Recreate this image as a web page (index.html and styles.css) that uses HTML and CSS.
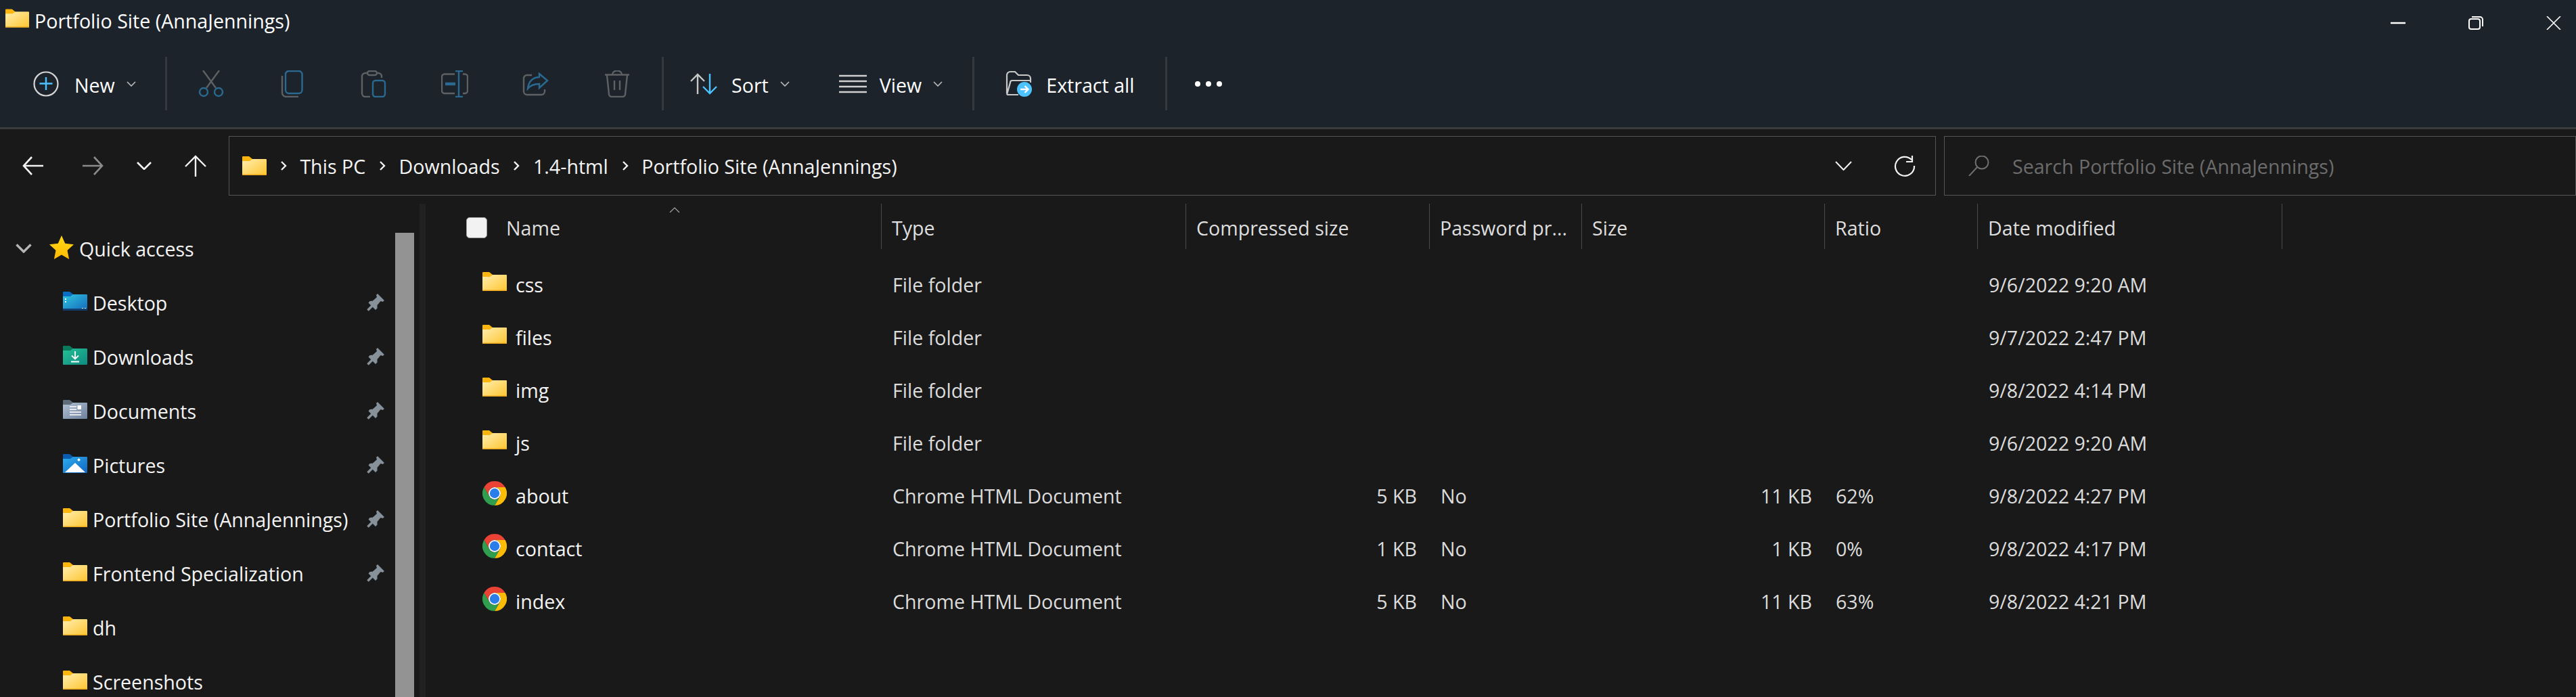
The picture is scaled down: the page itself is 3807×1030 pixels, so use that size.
FILE: index.html
```html
<!DOCTYPE html>
<html lang="en">
<head>
    <meta charset="UTF-8">
    <title>Portfolio Site (AnnaJennings)</title>
    <link rel="stylesheet" href="styles.css">
</head>
<body>
    <svg class="sprite" aria-hidden="true">
        <defs>
            <linearGradient id="gYellow" x1="0" y1="0" x2="1" y2="1"><stop offset="0" stop-color="#ffeeb0"/><stop offset="1" stop-color="#fec52f"/></linearGradient>
            <linearGradient id="gStar" x1="0" y1="0" x2="0" y2="1"><stop offset="0" stop-color="#ffd91a"/><stop offset="1" stop-color="#ffb900"/></linearGradient>
            <linearGradient id="gDesk" x1="0" y1="0" x2="1" y2="1"><stop offset="0" stop-color="#2fc6e0"/><stop offset="1" stop-color="#1668bd"/></linearGradient>
            <linearGradient id="gDown" x1="0" y1="0" x2="1" y2="1"><stop offset="0" stop-color="#24c196"/><stop offset="1" stop-color="#0e8a80"/></linearGradient>
            <linearGradient id="gDocs" x1="0" y1="0" x2="1" y2="1"><stop offset="0" stop-color="#b3c2d3"/><stop offset="1" stop-color="#6c7f9c"/></linearGradient>
            <linearGradient id="gPics" x1="0" y1="0" x2="1" y2="1"><stop offset="0" stop-color="#2bb0f0"/><stop offset="1" stop-color="#1464c0"/></linearGradient>

            <symbol id="folder" viewBox="0 0 36 28">
                <path d="M1 0H10L15 4V9H0V1A1 1 0 0 1 1 0Z" fill="#fbb50f"/>
                <path d="M0 7H11L15 4H35A1 1 0 0 1 36 5V27A1 1 0 0 1 35 28H1A1 1 0 0 1 0 27Z" fill="url(#gYellow)"/>
                <path d="M0 27.2H36" stroke="#eda81c" stroke-width="1.4"/>
            </symbol>
            <symbol id="chrome" viewBox="0 0 36 36">
                <path d="M2.41 9A18 18 0 0 1 33.59 9H18A9 9 0 0 0 10.2 22.5Z" fill="#ea4335"/>
                <path d="M33.59 9A18 18 0 0 1 18 36L25.79 22.5A9 9 0 0 0 18 9Z" fill="#fbbc05"/>
                <path d="M18 36A18 18 0 0 1 2.41 9L10.2 22.5A9 9 0 0 0 25.79 22.5Z" fill="#2f9e4f"/>
                <circle cx="18" cy="18" r="9" fill="#fff"/>
                <circle cx="18" cy="18" r="7.2" fill="#2b7de9"/>
            </symbol>
            <symbol id="pin" viewBox="0 0 26 26">
                <path d="M16 0 26 10 23.500 12 20.500 11 15.500 17 15.500 21.500 13 24 2.500 13.500 4.500 11 9 10.500 15 5 14 2Z" fill="#87919a"/>
                <path d="M1.500 24.500 8 18" stroke="#87919a" stroke-width="3.500"/>
            </symbol>
            <symbol id="crumb" viewBox="0 0 10 14">
                <path d="M2 1 8 7 2 13" fill="none" stroke="#f2f2f2" stroke-width="2.400"/>
            </symbol>
            <symbol id="chev" viewBox="0 0 14 8">
                <path d="M1 1 7 7 13 1" fill="none" stroke="#b4b8bb" stroke-width="1.700"/>
            </symbol>
        </defs>
    </svg>

    <div class="window">
        <header class="ribbon">
            <div class="titlebar">
                <svg class="folder-title"><use href="#folder"/></svg>
                <span class="title-text">Portfolio Site (AnnaJennings)</span>
                <div class="win-controls">
                    <svg class="win-btn" viewBox="0 0 22 20"><path d="M0 10H22" stroke="#fff" stroke-width="2.500"/></svg>
                    <svg class="win-btn" viewBox="0 0 22 20" fill="none" stroke="#fff" stroke-width="2"><rect x="1" y="4" width="16" height="15" rx="3"/><path d="M5 1H17A4 4 0 0 1 21 5V15"/></svg>
                    <svg class="win-btn" viewBox="0 0 22 20" fill="none" stroke="#fff" stroke-width="1.600"><path d="M1 0 21 20M21 0 1 20"/></svg>
                </div>
            </div>
            <div class="commands">
                <div class="cmd cmd-new">
                    <svg class="icon-new" viewBox="0 0 38 38" fill="none"><circle cx="19" cy="19" r="17.500" stroke="#d6d6d6" stroke-width="2.200"/><path d="M19 9V28M9.500 18.500H28.500" stroke="#4cc2ff" stroke-width="2.400"/></svg>
                    <span class="cmd-label">New</span>
                    <svg class="chev"><use href="#chev"/></svg>
                </div>
                <div class="sep"></div>
                <div class="cmd-icons">
                    <svg class="icon-btn" viewBox="0 0 40 40" fill="none" stroke-width="2.400">
                        <path d="M8 0 27 26M32 0 13 26" stroke="#5d6163"/>
                        <circle cx="9" cy="32" r="6" stroke="#2b6a90"/><circle cx="31" cy="32" r="6" stroke="#2b6a90"/>
                    </svg>
                    <svg class="icon-btn" viewBox="0 0 40 40" fill="none" stroke-width="2.400">
                        <path d="M5 8V33A6 6 0 0 0 11 39H29" stroke="#5d6163"/>
                        <rect x="10" y="1" width="24.500" height="33" rx="5" stroke="#2b6a90"/>
                    </svg>
                    <svg class="icon-btn" viewBox="0 0 40 40" fill="none" stroke-width="2.400">
                        <path d="M11 4H8A5 5 0 0 0 3 9V34A5 5 0 0 0 8 39H15M25 4H27A5 5 0 0 1 32 9V11" stroke="#5d6163"/>
                        <rect x="11" y="1" width="14" height="6" rx="3" stroke="#5d6163"/>
                        <rect x="19" y="15" width="18" height="24" rx="4" stroke="#2b6a90"/>
                    </svg>
                    <svg class="icon-btn" viewBox="0 0 40 40" fill="none" stroke-width="2.400">
                        <path d="M20 5.500H5A4 4 0 0 0 1 9.500V30A4 4 0 0 0 5 34H20M32 5.500H35A4 4 0 0 1 39 9.500V30A4 4 0 0 1 35 34H32" stroke="#5d6163"/>
                        <path d="M26 1V39M21 1H32M21 39H32" stroke="#2b6a90"/>
                        <path d="M6 20H21" stroke="#2b6a90" stroke-width="4.500"/>
                    </svg>
                    <svg class="icon-btn" viewBox="0 0 40 40" fill="none" stroke-width="2.400">
                        <path d="M14 7H7A5 5 0 0 0 2 12V31A5 5 0 0 0 7 36H28A5 5 0 0 0 33 31V28" stroke="#5d6163"/>
                        <path d="M25 5 37 15 25 26V20C17 20 12 22 8 27C9 16 16 10 25 10Z" stroke="#2b6a90"/>
                    </svg>
                    <svg class="icon-btn" viewBox="0 0 40 40" fill="none" stroke="#5d6163" stroke-width="2.400">
                        <path d="M2 6.500H38M13 6A7 5.500 0 0 1 27 6M5 7 8 35A4 4 0 0 0 12 39H28A4 4 0 0 0 32 35L35 7M16 15V29M24 15V29"/>
                    </svg>
                </div>
                <div class="sep"></div>
                <div class="cmd cmd-sort">
                    <svg class="icon-sort" viewBox="0 0 42 32" fill="none" stroke-width="2.400">
                        <path d="M12 31V2M2 12 12 2 22 12" stroke="#c8c8c8"/>
                        <path d="M30 1V30M20 20 30 30 40 20" stroke="#4cc2ff"/>
                    </svg>
                    <span class="cmd-label">Sort</span>
                    <svg class="chev"><use href="#chev"/></svg>
                </div>
                <div class="cmd cmd-view">
                    <svg class="icon-view" viewBox="0 0 41 28" stroke="#cfcfcf" stroke-width="2.600"><path d="M0 2H41M0 10H41M0 18H41M0 26H41"/></svg>
                    <span class="cmd-label">View</span>
                    <svg class="chev"><use href="#chev"/></svg>
                </div>
                <div class="sep sep-view"></div>
                <div class="cmd cmd-extract">
                    <svg class="icon-extract" viewBox="0 0 40 40" fill="none">
                        <path d="M3 34V7A5 5 0 0 1 8 2H15L20 7H33A5 5 0 0 1 38 12V18M3 36 8 18A3 3 0 0 1 11 15H38M3 36H20" stroke="#c8c8c8" stroke-width="2.200"/>
                        <circle cx="29" cy="28" r="11" fill="#4cc2ff"/>
                        <path d="M23 28H34M29.500 23 34.500 28 29.500 33" stroke="#fff" stroke-width="2.400"/>
                    </svg>
                    <span class="cmd-label">Extract all</span>
                </div>
                <div class="sep"></div>
                <div class="dots"><i></i><i></i><i></i></div>
            </div>
        </header>

        <nav class="navbar">
            <div class="nav-btns">
                <svg class="nav-arrow" viewBox="0 0 32 28" fill="none" stroke="#f2f2f2" stroke-width="2.600"><path d="M31 14H3M14 1 2 14 14 27"/></svg>
                <svg class="nav-arrow nav-forward" viewBox="0 0 32 28" fill="none" stroke="#8b8b8b" stroke-width="2.600"><path d="M1 14H29M18 1 30 14 18 27"/></svg>
                <svg class="nav-down" viewBox="0 0 22 12" fill="none" stroke="#f2f2f2" stroke-width="2.600"><path d="M1 1 11 11 21 1"/></svg>
                <svg class="nav-up" viewBox="0 0 32 32" fill="none" stroke="#f2f2f2" stroke-width="2.400"><path d="M16 32V2M1 17 16 2 31 17"/></svg>
            </div>
            <div class="address">
                <svg class="folder-addr"><use href="#folder"/></svg>
                <svg class="crumb"><use href="#crumb"/></svg>
                <span>This PC</span>
                <svg class="crumb"><use href="#crumb"/></svg>
                <span>Downloads</span>
                <svg class="crumb"><use href="#crumb"/></svg>
                <span>1.4-html</span>
                <svg class="crumb"><use href="#crumb"/></svg>
                <span>Portfolio Site (AnnaJennings)</span>
                <svg class="addr-down" viewBox="0 0 25 14" fill="none" stroke="#f2f2f2" stroke-width="2"><path d="M1 1 12.500 13 24 1"/></svg>
                <svg class="addr-refresh" viewBox="0 0 32 32" fill="none" stroke="#f2f2f2" stroke-width="2.200"><path d="M26 7A14 14 0 1 0 30 16M27 1V10H18"/></svg>
            </div>
            <div class="search">
                <svg class="search-icon" viewBox="0 0 32 30" fill="none" stroke="#707070" stroke-width="2"><circle cx="21" cy="10" r="9.500"/><path d="M14 17 2 30"/></svg>
                <span>Search Portfolio Site (AnnaJennings)</span>
            </div>
        </nav>

        <div class="content">
            <aside class="sidebar">
                <div class="tree">
                    <div class="tree-row tree-head">
                        <svg class="tree-chev" viewBox="0 0 24 14" fill="none" stroke="#b5b5b5" stroke-width="3.400"><path d="M1.500 1.500 12 12 22.500 1.500"/></svg>
                        <svg class="star" viewBox="0 0 36 36"><path d="M18 0 23.200 11.800 36 13.300 26.500 22 29.100 35 18 28.500 6.900 35 9.500 22 0 13.300 12.800 11.800Z" fill="url(#gStar)"/></svg>
                        <span>Quick access</span>
                    </div>
                    <div class="tree-row">
                        <svg class="tree-icon" viewBox="0 0 36 28">
                            <path d="M1 0H10L15 4V9H0V1A1 1 0 0 1 1 0Z" fill="#0b6cc4"/>
                            <path d="M0 7H11L15 4H35A1 1 0 0 1 36 5V27A1 1 0 0 1 35 28H1A1 1 0 0 1 0 27Z" fill="url(#gDesk)"/>
                            <path d="M0 26.500H36" stroke="#123f70" stroke-width="3"/>
                            <path d="M3 10H5V12H3ZM3 14H5V16H3ZM28 24H30V25H28ZM32 24H34V25H32Z" fill="#e6f7fb"/>
                        </svg>
                        <span>Desktop</span>
                        <svg class="pin"><use href="#pin"/></svg>
                    </div>
                    <div class="tree-row">
                        <svg class="tree-icon" viewBox="0 0 36 28">
                            <path d="M1 0H10L15 4V9H0V1A1 1 0 0 1 1 0Z" fill="#0a7a5e"/>
                            <path d="M0 7H11L15 4H35A1 1 0 0 1 36 5V27A1 1 0 0 1 35 28H1A1 1 0 0 1 0 27Z" fill="url(#gDown)"/>
                            <path d="M18 8V19M13 14.500 18 19.500 23 14.500M12 23.500H24" fill="none" stroke="#fff" stroke-width="1.800"/>
                        </svg>
                        <span>Downloads</span>
                        <svg class="pin"><use href="#pin"/></svg>
                    </div>
                    <div class="tree-row">
                        <svg class="tree-icon" viewBox="0 0 36 28">
                            <path d="M1 0H10L15 4V9H0V1A1 1 0 0 1 1 0Z" fill="#5d6c79"/>
                            <path d="M0 7H11L15 4H35A1 1 0 0 1 36 5V27A1 1 0 0 1 35 28H1A1 1 0 0 1 0 27Z" fill="url(#gDocs)"/>
                            <path d="M10 10H20M10 14H20M10 18H27M10 22H27" fill="none" stroke="#fff" stroke-width="1.500"/>
                            <path d="M21.500 8H27V14H21.500Z" fill="#fff"/>
                        </svg>
                        <span>Documents</span>
                        <svg class="pin"><use href="#pin"/></svg>
                    </div>
                    <div class="tree-row">
                        <svg class="tree-icon" viewBox="0 0 36 28">
                            <path d="M1 0H10L15 4V9H0V1A1 1 0 0 1 1 0Z" fill="#0b5cb0"/>
                            <path d="M0 7H11L15 4H35A1 1 0 0 1 36 5V27A1 1 0 0 1 35 28H1A1 1 0 0 1 0 27Z" fill="url(#gPics)"/>
                            <path d="M3 27 18 13 33 27Z" fill="#fff"/>
                            <circle cx="23.500" cy="8.500" r="2" fill="#fff"/>
                        </svg>
                        <span>Pictures</span>
                        <svg class="pin"><use href="#pin"/></svg>
                    </div>
                    <div class="tree-row">
                        <svg class="tree-icon"><use href="#folder"/></svg>
                        <span>Portfolio Site (AnnaJennings)</span>
                        <svg class="pin"><use href="#pin"/></svg>
                    </div>
                    <div class="tree-row">
                        <svg class="tree-icon"><use href="#folder"/></svg>
                        <span>Frontend Specialization</span>
                        <svg class="pin"><use href="#pin"/></svg>
                    </div>
                    <div class="tree-row">
                        <svg class="tree-icon"><use href="#folder"/></svg>
                        <span>dh</span>
                    </div>
                    <div class="tree-row">
                        <svg class="tree-icon"><use href="#folder"/></svg>
                        <span>Screenshots</span>
                    </div>
                </div>
                <div class="scroll-thumb"></div>
            </aside>
            <div class="splitter"></div>

            <main class="files">
                <div class="file-head">
                    <div class="hcell hcell-name">
                        <span class="checkbox"></span>
                        <span>Name</span>
                        <svg class="sort-caret" viewBox="0 0 16 8" fill="none" stroke="#a8a8a8" stroke-width="1.200"><path d="M1 8 8 1 15 8"/></svg>
                    </div>
                    <div class="hcell">Type</div>
                    <div class="hcell">Compressed size</div>
                    <div class="hcell">Password pr...</div>
                    <div class="hcell">Size</div>
                    <div class="hcell">Ratio</div>
                    <div class="hcell">Date modified</div>
                </div>
                <div class="file-row">
                    <div class="cell cell-name"><svg class="file-folder"><use href="#folder"/></svg>css</div>
                    <div class="cell">File folder</div><div class="cell"></div><div class="cell"></div><div class="cell"></div><div class="cell"></div>
                    <div class="cell">9/6/2022 9:20 AM</div>
                </div>
                <div class="file-row">
                    <div class="cell cell-name"><svg class="file-folder"><use href="#folder"/></svg>files</div>
                    <div class="cell">File folder</div><div class="cell"></div><div class="cell"></div><div class="cell"></div><div class="cell"></div>
                    <div class="cell">9/7/2022 2:47 PM</div>
                </div>
                <div class="file-row">
                    <div class="cell cell-name"><svg class="file-folder"><use href="#folder"/></svg>img</div>
                    <div class="cell">File folder</div><div class="cell"></div><div class="cell"></div><div class="cell"></div><div class="cell"></div>
                    <div class="cell">9/8/2022 4:14 PM</div>
                </div>
                <div class="file-row">
                    <div class="cell cell-name"><svg class="file-folder"><use href="#folder"/></svg>js</div>
                    <div class="cell">File folder</div><div class="cell"></div><div class="cell"></div><div class="cell"></div><div class="cell"></div>
                    <div class="cell">9/6/2022 9:20 AM</div>
                </div>
                <div class="file-row">
                    <div class="cell cell-name"><svg class="file-chrome"><use href="#chrome"/></svg>about</div>
                    <div class="cell">Chrome HTML Document</div>
                    <div class="cell cell-num">5 KB</div>
                    <div class="cell">No</div>
                    <div class="cell cell-num">11 KB</div>
                    <div class="cell">62%</div>
                    <div class="cell">9/8/2022 4:27 PM</div>
                </div>
                <div class="file-row">
                    <div class="cell cell-name"><svg class="file-chrome"><use href="#chrome"/></svg>contact</div>
                    <div class="cell">Chrome HTML Document</div>
                    <div class="cell cell-num">1 KB</div>
                    <div class="cell">No</div>
                    <div class="cell cell-num">1 KB</div>
                    <div class="cell">0%</div>
                    <div class="cell">9/8/2022 4:17 PM</div>
                </div>
                <div class="file-row">
                    <div class="cell cell-name"><svg class="file-chrome"><use href="#chrome"/></svg>index</div>
                    <div class="cell">Chrome HTML Document</div>
                    <div class="cell cell-num">5 KB</div>
                    <div class="cell">No</div>
                    <div class="cell cell-num">11 KB</div>
                    <div class="cell">63%</div>
                    <div class="cell">9/8/2022 4:21 PM</div>
                </div>
            </main>
        </div>
    </div>
</body>
</html>
```

FILE: styles.css
```css
html, body {
    margin: 0;
    height: 100%;
    overflow: hidden;
    background-color: #191919;
}
body {
    font-family: "Open Sans", "Noto Sans", sans-serif;
    font-size: 28.6px;
    color: #ececec;
}
svg {
    display: block;
    flex: none;
}
.sprite {
    width: 0;
    height: 0;
}
.window {
    display: flex;
    flex-direction: column;
    height: 1030px;
    overflow: hidden;
}

/* title + command bar */
.ribbon {
    background-color: #1c232a;
    height: 188px;
    border-bottom: 3px solid #3b3c3d;
    flex: none;
}
.titlebar {
    display: flex;
    align-items: center;
    height: 60px;
    padding-left: 8px;
    color: #fff;
}
.folder-title {
    width: 35px;
    height: 28px;
    margin: -6px 8px 0 0;
}
.win-controls {
    display: flex;
    gap: 93px;
    margin: 8px 22px 0 auto;
}
.win-btn {
    width: 22px;
    height: 20px;
}
.commands {
    display: flex;
    align-items: center;
    height: 79px;
    margin-top: 24px;
    color: #fff;
}
.sep {
    width: 3px;
    height: 79px;
    background-color: #33393f;
    flex: none;
}
.cmd {
    display: flex;
    align-items: center;
    flex: none;
}
.cmd-label {
    padding-top: 3px;
}
.chev {
    width: 14px;
    height: 8px;
    margin-left: 17px;
}
.cmd-new {
    width: 244px;
    padding-left: 49px;
    box-sizing: border-box;
}
.icon-new {
    width: 38px;
    height: 38px;
    margin-right: 23px;
}
.cmd-icons {
    display: flex;
    padding-left: 5px;
    padding-right: 6px;
}
.icon-btn {
    width: 40px;
    height: 40px;
    margin: 0 40px;
}
.cmd-sort {
    margin-left: 38px;
}
.icon-sort {
    width: 42px;
    height: 32px;
    margin-right: 20px;
}
.cmd-view {
    margin-left: 73px;
}
.icon-view {
    width: 41px;
    height: 28px;
    margin-right: 19px;
}
.sep-view {
    margin-left: 44px;
}
.cmd-extract {
    margin-left: 45px;
    margin-right: 45px;
}
.icon-extract {
    width: 40px;
    height: 40px;
    margin-right: 21px;
}
.dots {
    display: flex;
    gap: 8px;
    margin-left: 41px;
}
.dots i {
    display: block;
    width: 8px;
    height: 8px;
    border-radius: 50%;
    background-color: #fff;
}

/* back/forward + address + search */
.navbar {
    display: flex;
    align-items: center;
    height: 88px;
    margin: 10px 0 12px;
    flex: none;
}
.nav-btns {
    display: flex;
    align-items: center;
    gap: 49px;
    padding-left: 33px;
}
.nav-arrow {
    width: 32px;
    height: 28px;
}
.nav-forward {
    margin-left: 7px;
}
.nav-down {
    width: 22px;
    height: 12px;
}
.nav-up {
    width: 32px;
    height: 32px;
}
.address, .search {
    display: flex;
    align-items: center;
    box-sizing: border-box;
    height: 88px;
    border: 1px solid #555;
}
.address {
    gap: 19.7px;
    width: 2523px;
    margin-left: 33px;
    padding: 0 29px 0 19px;
    color: #f4f4f4;
}
.folder-addr {
    width: 36px;
    height: 28px;
}
.crumb {
    width: 10px;
    height: 14px;
}
.addr-down {
    width: 25px;
    height: 14px;
    margin-left: auto;
}
.addr-refresh {
    width: 32px;
    height: 32px;
    margin-left: 42px;
}
.search {
    width: 934px;
    margin-left: 12px;
    padding-left: 34px;
    color: #6c6c6c;
}
.search-icon {
    width: 32px;
    height: 30px;
    margin-right: 34px;
}

/* sidebar */
.content {
    display: flex;
    flex: 1;
    min-height: 0;
}
.sidebar {
    display: flex;
    width: 620px;
    flex: none;
    overflow: hidden;
}
.tree {
    width: 584px;
    padding-top: 26px;
    flex: none;
}
.tree-row {
    display: flex;
    align-items: center;
    height: 80px;
    padding: 0 16px 0 93px;
    box-sizing: border-box;
    color: #f4f4f4;
}
.tree-head {
    padding-left: 23px;
}
.tree-chev {
    width: 24px;
    height: 14px;
    margin-right: 26px;
}
.star {
    width: 36px;
    height: 36px;
    margin: -3px 8px 0 0;
}
.tree-icon {
    width: 36px;
    height: 28px;
    margin: -5px 8px 0 0;
}
.pin {
    width: 26px;
    height: 26px;
    margin-left: auto;
}
.scroll-thumb {
    width: 28px;
    margin-top: 43px;
    background-color: #939393;
}
.splitter {
    width: 9px;
    background-color: #212121;
    flex: none;
}

/* file list */
.file-head, .file-row {
    display: grid;
    grid-template-columns: 674px 450px 360px 225px 359px 226px 450px;
    width: 2744px;
}
.file-head {
    height: 67px;
    margin-bottom: 14px;
    color: #dedede;
}
.hcell {
    display: flex;
    align-items: center;
    padding: 4px 0 0 15px;
    border-right: 1px solid #4a4a4a;
    white-space: nowrap;
}
.hcell-name {
    position: relative;
    padding-left: 60px;
}
.checkbox {
    display: block;
    box-sizing: border-box;
    width: 31px;
    height: 31px;
    margin-right: 28px;
    background-color: #f2f2f2;
    border: 1px solid #999;
    border-radius: 5px;
}
.sort-caret {
    position: absolute;
    left: 360px;
    top: 5px;
    width: 16px;
    height: 8px;
}
.file-row {
    height: 78px;
}
.cell {
    display: flex;
    align-items: center;
    padding-left: 16px;
    padding-bottom: 2px;
    color: #dcdcdc;
    white-space: nowrap;
}
.cell-name {
    padding-left: 84px;
    color: #f4f4f4;
}
.cell-num {
    justify-content: flex-end;
    padding-left: 0;
    padding-right: 19px;
}
.file-folder, .file-chrome {
    width: 36px;
    margin-right: 13px;
}
.file-folder {
    height: 28px;
    margin-top: -8px;
}
.file-chrome {
    height: 36px;
    margin-top: -7px;
}
```
